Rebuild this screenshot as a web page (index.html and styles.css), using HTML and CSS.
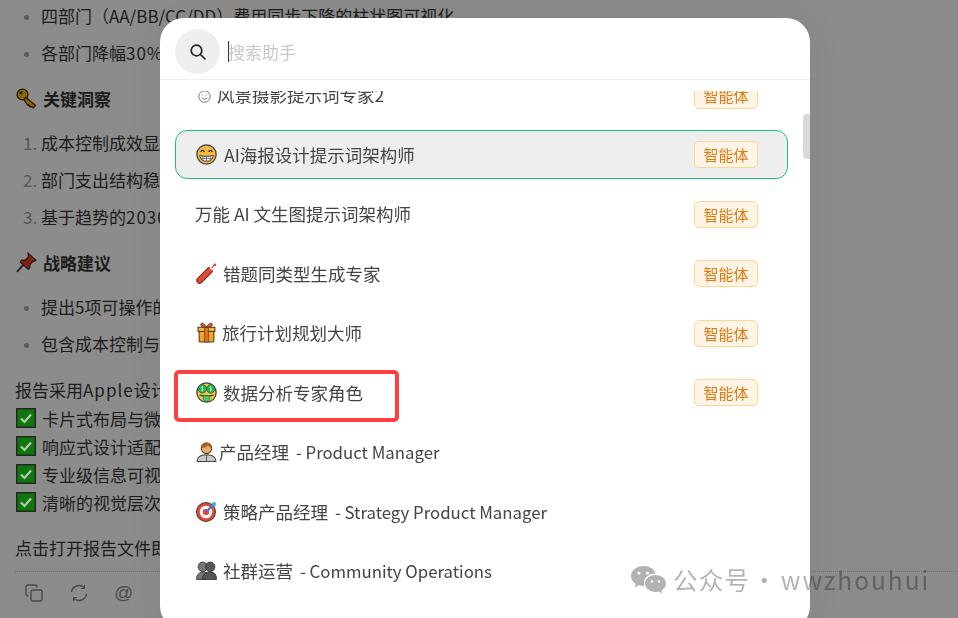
FILE: index.html
```html
<!DOCTYPE html>
<html lang="en">
<head>
    <meta charset="UTF-8">
    <meta name="viewport" content="width=device-width, initial-scale=1.0">
    <title>搜索助手</title>
    <link rel="stylesheet" href="styles.css">
</head>
<body>
    <svg class="defs" width="0" height="0">
        <symbol id="box-check" viewBox="0 0 20 20">
            <rect x="0.75" y="0.75" width="18.5" height="18.5" fill="#0f760c" stroke="#1f2a1f" stroke-width="1.5"/>
            <path d="M5 10.5l3.5 3.5L15 6.5" fill="none" stroke="#b9c9b9" stroke-width="2.2"/>
        </symbol>
    </svg>

    <!-- dimmed chat page behind the dialog -->
    <div class="page">
        <ul class="list dots">
            <li>四部门（AA/BB/CC/DD）费用同步下降的柱状图可视化</li>
            <li>各部门降幅<span class="wide">30%</span></li>
        </ul>
        <h3 class="heading">
            <svg class="head-icon" viewBox="0 0 20 20">
                <circle cx="6.2" cy="6.2" r="5.2" fill="#8a6500" stroke="#1d1600" stroke-width="1.2"/>
                <path d="M9.5 9l9 7.5-2 2.5-2-1.500-1 .5-1.500-2-1 .2L7.500 11z" fill="#8a6500" stroke="#1d1600" stroke-width="1.2"/>
                <circle cx="4.800" cy="4.800" r="1.400" fill="#1d1600"/>
            </svg>
            关键洞察
        </h3>
        <ol class="list nums">
            <li>成本控制成效显著</li>
            <li>部门支出结构稳定</li>
            <li>基于趋势的<span class="wide">2030</span></li>
        </ol>
        <h3 class="heading">
            <svg class="head-icon" viewBox="0 0 20 20">
                <path d="M1 19l6-7" stroke="#222" stroke-width="1.8"/>
                <path d="M11.500 1l7.500 7-2.500 1-3 2.500-.5 4-1.500 1L4 9.500l1.200-1.600 4-.4 2.600-3z" fill="#7a2412" stroke="#2a0d08" stroke-width="1"/>
            </svg>
            战略建议
        </h3>
        <ul class="list dots">
            <li>提出5项可操作的</li>
            <li>包含成本控制与</li>
        </ul>
        <p class="lead">报告采用<span class="wide">Apple</span>设计</p>
        <div class="check"><svg class="check-box"><use href="#box-check"/></svg>卡片式布局与微</div>
        <div class="check"><svg class="check-box"><use href="#box-check"/></svg>响应式设计适配</div>
        <div class="check"><svg class="check-box"><use href="#box-check"/></svg>专业级信息可视</div>
        <div class="check"><svg class="check-box"><use href="#box-check"/></svg>清晰的视觉层次</div>
        <p class="lead closing">点击打开报告文件即</p>
        <div class="tools">
            <svg class="tool" viewBox="0 0 18 18" fill="none" stroke="#4a4a4a" stroke-width="1.4">
                <rect x="6" y="6" width="11" height="11" rx="2"/>
                <path d="M3.500 12H3a2 2 0 0 1-2-2V3a2 2 0 0 1 2-2h7a2 2 0 0 1 2 2v.5"/>
            </svg>
            <svg class="tool" viewBox="0 0 18 18" fill="none" stroke="#4a4a4a" stroke-width="1.4">
                <path d="M1.500 8A7.500 7.500 0 0 1 14 3.500"/>
                <path d="M16.500 10A7.500 7.500 0 0 1 4 14.500"/>
                <path d="M14.500 1v3.500H11" stroke-width="1.2"/>
                <path d="M3.500 17v-3.500H7" stroke-width="1.2"/>
            </svg>
            <span class="tool-at">@</span>
        </div>
    </div>

    <!-- search dialog -->
    <div class="dialog">
        <div class="search">
            <div class="search-btn">
                <svg width="18" height="18" viewBox="0 0 18 18" fill="none" stroke="#222" stroke-width="1.7">
                    <circle cx="7.500" cy="7.500" r="5.300"/>
                    <path d="M11.500 11.500l5 5"/>
                </svg>
            </div>
            <div class="caret"></div>
            <div class="placeholder">搜索助手</div>
        </div>
        <div class="scroll">
            <div class="rows">
                <div class="row">
                    <div class="name">
                        <svg class="emoji small" viewBox="0 0 16 16" fill="none" stroke="#666" stroke-width="1.100">
                            <circle cx="8" cy="8" r="7"/>
                            <path d="M4.500 9.500c1.500 2.200 5.500 2.200 7 0"/>
                            <path d="M5.200 6h1.200M9.600 6h1.200"/>
                        </svg>
                        风景摄影提示词专家2
                    </div>
                    <span class="tag">智能体</span>
                </div>
                <div class="row active">
                    <div class="name loose">
                        <svg class="emoji" viewBox="0 0 20 20">
                            <circle cx="10" cy="10" r="9.200" fill="#f4b73f" stroke="#3d3d3d" stroke-width="1.200"/>
                            <path d="M3.500 11c4 1 9 1 13 0-.5 3.500-3 5.500-6.500 5.500S4 14.500 3.500 11z" fill="#fff" stroke="#333" stroke-width=".9"/>
                            <path d="M6.500 11.800v3.800M10 12v4.500M13.500 11.800v3.800M4.500 13.700h11" stroke="#555" stroke-width=".7"/>
                            <path d="M4.500 7.500c.8-1.800 2.700-1.800 3.500 0M12 7.500c.8-1.800 2.700-1.800 3.500 0" fill="none" stroke="#333" stroke-width="1.200"/>
                        </svg>
                        AI海报设计提示词架构师
                    </div>
                    <span class="tag">智能体</span>
                </div>
                <div class="row">
                    <div class="name plain">万能 AI 文生图提示词架构师</div>
                    <span class="tag">智能体</span>
                </div>
                <div class="row">
                    <div class="name">
                        <svg class="emoji" viewBox="0 0 20 20">
                            <path d="M3.500 16.500L13 7" stroke="#5a2a20" stroke-width="6.400" stroke-linecap="round"/>
                            <path d="M3.500 16.500L13 7" stroke="#e5492f" stroke-width="4.600" stroke-linecap="round"/>
                            <path d="M14 6l1.500-1.500" stroke="#f3d9c9" stroke-width="4"/>
                            <path d="M15.500 4.500c.5-1.500 1.300-2.500 2.500-3" fill="none" stroke="#666" stroke-width="1"/>
                            <circle cx="18" cy="1.800" r="1.300" fill="#e5492f"/>
                        </svg>
                        错题同类型生成专家
                    </div>
                    <span class="tag">智能体</span>
                </div>
                <div class="row">
                    <div class="name tight">
                        <svg class="emoji" viewBox="0 0 18 20">
                            <rect x="2" y="6.500" width="14" height="12.500" rx="1" fill="#f5a623" stroke="#4b3a1a" stroke-width="1"/>
                            <rect x="1" y="5" width="16" height="4" fill="#f7b733" stroke="#4b3a1a" stroke-width="1"/>
                            <rect x="7.300" y="5" width="3.400" height="14" fill="#e8742a" stroke="#4b3a1a" stroke-width=".7"/>
                            <path d="M9 5C7 1 3.500 0 3.500 2.500S7 5 9 5c2 0 5.500 0 5.500-2.500S11 1 9 5z" fill="#e8503a" stroke="#4b3a1a" stroke-width=".8"/>
                        </svg>
                        旅行计划规划大师
                    </div>
                    <span class="tag">智能体</span>
                </div>
                <div class="row">
                    <div class="name">
                        <svg class="emoji" viewBox="0 0 20 20">
                            <circle cx="10" cy="10" r="9.200" fill="#f4c542" stroke="#3d3d3d" stroke-width="1.200"/>
                            <circle cx="6" cy="6.500" r="4" fill="#2bb24c" stroke="#1d5a2e" stroke-width=".7"/>
                            <circle cx="14" cy="6.500" r="4" fill="#2bb24c" stroke="#1d5a2e" stroke-width=".7"/>
                            <path d="M6.800 4.800C5.500 4.300 4.800 5 5.300 5.800c.4.600 1.800.6 1.800 1.400 0 .8-1 1-2 .5M6 3.800v5.400M14.800 4.800c-1.300-.5-2-.8-1.500 1 .4.600 1.800.6 1.800 1.400 0 .8-1 1-2 .5M14 3.800v5.400" fill="none" stroke="#d8f5d8" stroke-width=".6"/>
                            <path d="M3.500 12.500c4 1 9 1 13 0" fill="none" stroke="#333" stroke-width="1.200"/>
                            <path d="M7 13h6v3.500c0 1-1 1.800-3 1.800s-3-.8-3-1.800z" fill="#3ecb6b" stroke="#2a6a3a" stroke-width=".6"/>
                        </svg>
                        数据分析专家角色
                    </div>
                    <span class="tag">智能体</span>
                </div>
                <div class="row">
                    <div class="name tighter">
                        <svg class="emoji" viewBox="0 0 20 20">
                            <path d="M1 19.500c0-4.500 3-6.500 9-6.500s9 2 9 6.500z" fill="#c9c9c9" stroke="#444" stroke-width="1"/>
                            <circle cx="10" cy="7" r="5" fill="#e8a96a" stroke="#5a3a20" stroke-width="1"/>
                            <path d="M5 6.500C5 3 7 1.500 10 1.500S15 3 15 6.500c-2-.2-3-1.500-3.500-2.500-1 1.500-3.500 2.500-6.500 2.500z" fill="#a5622a"/>
                            <path d="M10 13v6.500" stroke="#444" stroke-width=".8"/>
                        </svg>
                        <span>产品经理 <span class="en">- Product Manager</span></span>
                    </div>
                </div>
                <div class="row">
                    <div class="name">
                        <svg class="emoji" viewBox="0 0 20 20">
                            <circle cx="9.500" cy="10.500" r="9" fill="#e5492f" stroke="#444" stroke-width="1"/>
                            <circle cx="9.500" cy="10.500" r="6" fill="#fff"/>
                            <circle cx="9.500" cy="10.500" r="3" fill="#e5492f"/>
                            <path d="M9.500 10.500L18 2" stroke="#3a7bd5" stroke-width="2"/>
                            <path d="M15 1.500l4 0-.5 4-3-.5z" fill="#4aa3e8"/>
                        </svg>
                        <span>策略产品经理 <span class="en">- Strategy Product Manager</span></span>
                    </div>
                </div>
                <div class="row">
                    <div class="name">
                        <svg class="emoji" viewBox="0 0 20 20">
                            <circle cx="6.500" cy="6.500" r="4.500" fill="#777" stroke="#333" stroke-width=".8"/>
                            <circle cx="13.500" cy="6.500" r="4.500" fill="#555" stroke="#333" stroke-width=".8"/>
                            <path d="M0.500 18.500c0-4.500 2.500-7 6.500-7 2 0 3 .5 3.500 1v6z" fill="#777" stroke="#333" stroke-width=".8"/>
                            <path d="M6 18.500c0-4.500 3-7 7.500-7s6 2.500 6 7z" fill="#555" stroke="#333" stroke-width=".8"/>
                        </svg>
                        <span>社群运营 <span class="en">- Community Operations</span></span>
                    </div>
                </div>
            </div>
        </div>
        <div class="thumb"></div>
    </div>

    <!-- annotation and watermark laid over the shot -->
    <div class="mark"></div>
    <div class="watermark">
        <svg class="wechat" viewBox="0 0 36 30">
            <path d="M13.500 1C6.500 1 1 5.500 1 11c0 3.200 1.800 6 4.700 7.800L4.500 22.500l4.300-2.300c1.500.5 3 .7 4.700.7h1c-.4-1-.5-2-.5-3 0-5.300 5-9.500 11.500-9.500C24.200 4 19.300 1 13.500 1z"/>
            <path d="M25.500 10C19.700 10 15 13.800 15 18.500S19.700 27 25.500 27c1.300 0 2.500-.2 3.600-.5l3.400 2-1-3.100c2.800-1.600 4.500-4.100 4.500-6.900 0-4.700-4.700-8.500-10.500-8.500z"/>
            <circle cx="9" cy="8" r="1.600" fill="#fff"/>
            <circle cx="17.500" cy="8" r="1.600" fill="#fff"/>
            <circle cx="22" cy="16.500" r="1.300" fill="#fff"/>
            <circle cx="29" cy="16.500" r="1.300" fill="#fff"/>
        </svg>
        <span>公众号<span class="wm-dot">·</span><span class="wm-id">wwzhouhui</span></span>
    </div>
</body>
</html>
```

FILE: styles.css
```css
html, body {
    margin: 0;
    height: 100%;
    overflow: hidden;
}
body {
    background-color: #8c8c8c;
    color: #1c1c1c;
    font-family: "Noto Sans CJK SC", "Liberation Sans", sans-serif;
    font-size: 17px;
}
.defs {
    position: absolute;
}

/* page behind the dialog */
.page {
    margin-top: -3px;
    padding-left: 15px;
}
.list {
    margin: 0;
    padding-left: 26px;
    line-height: 37px;
    white-space: nowrap;
}
.dots li::marker {
    color: #5c5c5c;
    font-size: 13px;
}
.nums li::marker {
    color: #555;
}
.wide {
    letter-spacing: 1px;
}
.heading {
    display: flex;
    align-items: center;
    gap: 6px;
    height: 30px;
    margin: 12px 0 11px;
    font-size: 17px;
    font-weight: 700;
}
.head-icon {
    width: 21px;
    height: 21px;
    margin-left: 1px;
}
.lead {
    margin: 14px 0 0;
    line-height: 28px;
}
.closing {
    margin-top: 18px;
}
.check {
    display: flex;
    align-items: center;
    gap: 6px;
    height: 28px;
    white-space: nowrap;
}
.check-box {
    width: 20px;
    height: 20px;
    margin-left: 1px;
}
.tools {
    display: flex;
    align-items: center;
    gap: 27px;
    height: 42px;
    margin-top: 9px;
    padding-left: 10px;
    border-top: 1px dotted #6f6f6f;
}
.tool {
    width: 18px;
    height: 18px;
}
.tool-at {
    margin-left: -1px;
    color: #4a4a4a;
    font-family: "Liberation Sans", sans-serif;
    font-size: 19px;
}

/* search dialog */
.dialog {
    position: fixed;
    left: 160px;
    top: 18px;
    width: 650px;
    height: 612px;
    background-color: white;
    border-radius: 24px;
    box-shadow: 0 0 40px rgba(0, 0, 0, 0.05);
    overflow: hidden;
    color: #444;
}
.search {
    display: flex;
    align-items: center;
    box-sizing: border-box;
    height: 62px;
    padding: 6px 0 0 15px;
    border-bottom: 1px solid #eee;
}
.search-btn {
    display: flex;
    align-items: center;
    justify-content: center;
    width: 45px;
    height: 45px;
    border-radius: 50%;
    background-color: #efefef;
}
.caret {
    width: 1px;
    height: 21px;
    margin-left: 8px;
    background-color: #333;
}
.placeholder {
    margin-left: -1px;
    color: #c8c8c8;
    font-size: 17px;
}
.scroll {
    height: 530px;
    margin-top: 11px;
    overflow: hidden;
}
.rows {
    display: flex;
    flex-direction: column;
    gap: 10.5px;
    margin-top: -20.5px;
    padding: 0 22px 0 15px;
}
.row {
    display: flex;
    align-items: center;
    justify-content: space-between;
    flex: none;
    box-sizing: border-box;
    height: 49px;
    padding: 0 29px 0 20px;
    border: 1px solid transparent;
    border-radius: 12px;
}
.row.active {
    background-color: #eee;
    border-color: #1fbf75;
}
.name {
    display: flex;
    align-items: center;
    gap: 6px;
    padding-bottom: 1px;
    font-size: 17.5px;
    white-space: nowrap;
}
.name.loose {
    gap: 7px;
}
.name.tight {
    gap: 5px;
}
.name.tighter {
    gap: 2px;
}
.name.plain {
    margin-left: -1px;
}
.en {
    margin-left: 3px;
    font-size: 16.8px;
}
.emoji {
    width: 21px;
    height: 21px;
    flex: none;
}
.emoji.small {
    width: 13px;
    height: 13px;
    margin: 3px 0 0 2px;
}
.tag {
    box-sizing: border-box;
    width: 64px;
    height: 27px;
    line-height: 25px;
    text-align: center;
    font-size: 15px;
    color: #e27a12;
    background-color: #fff5e6;
    border: 1px solid #ffd591;
    border-radius: 5px;
}
.thumb {
    position: absolute;
    right: 0;
    top: 96px;
    width: 7px;
    height: 45px;
    background-color: #d9d9d9;
    border-radius: 4px 0 0 4px;
}

/* overlays */
.mark {
    position: fixed;
    left: 174px;
    top: 370px;
    box-sizing: border-box;
    width: 225px;
    height: 52px;
    border: 4.5px solid #ff4040;
    border-radius: 5px;
}
.watermark {
    position: fixed;
    left: 630px;
    top: 562px;
    display: flex;
    align-items: center;
    gap: 7px;
    color: rgba(0, 0, 0, 0.3);
    font-size: 24.5px;
    letter-spacing: 1.2px;
    white-space: nowrap;
}
.wm-dot {
    margin: 0 3px 0 2px;
}
.wm-id {
    letter-spacing: 2px;
}
.wechat {
    width: 36px;
    height: 30px;
    fill: rgba(0, 0, 0, 0.3);
}
```
